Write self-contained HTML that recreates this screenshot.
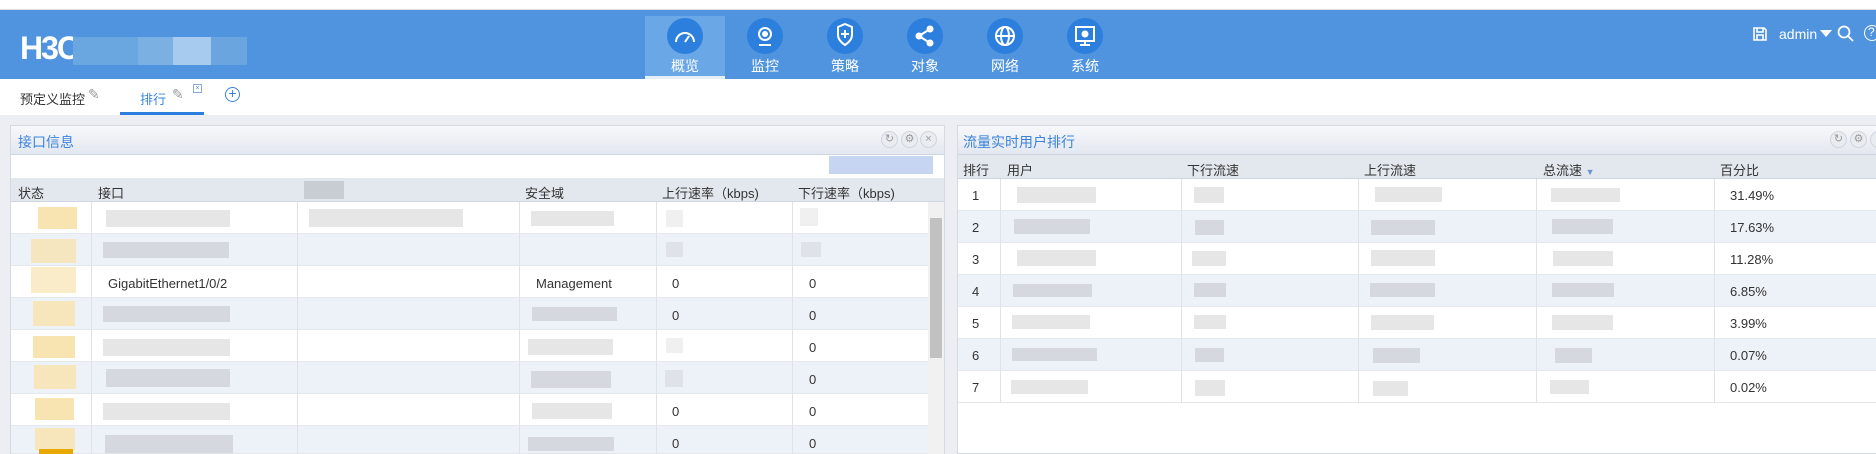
<!DOCTYPE html>
<html><head><meta charset="utf-8"><style>
*{margin:0;padding:0;box-sizing:border-box}
body{width:1876px;height:454px;overflow:hidden;background:#eceef3;font-family:"Liberation Sans","Noto Sans CJK SC",sans-serif;font-size:13px;color:#333;position:relative}
.a{position:absolute}
.hdr{left:0;top:10px;width:1876px;height:69px;background:#5094e0}
.nav{top:16px;width:80px;height:63px;text-align:center;color:#fff;font-size:14px}
.nav .c{position:absolute;left:22px;top:2px;width:36px;height:36px;border-radius:50%;background:#2c7fdc}
.nav span{position:absolute;left:0;width:80px;top:40px}
.g{background:#e6e6e6}
.gd{background:#d5d8de}
.y{background:#f8e4b0}
.row{height:32px;border-bottom:1px solid #e4e7ec}
.st{background:#edf1f8}
.th{background:#e3e8ef;border-bottom:1px solid #cfd6e0}
.vl{width:1px;background:#dfe3e9}
.ph{background:linear-gradient(#f7f8fb,#e3e7ef);border-bottom:1px solid #cfd5e0}
.ic{width:17px;height:17px;border-radius:50%;background:#e9ecf1;border:1px solid #d0d5dd;color:#999;font-size:11px;text-align:center;line-height:15px}
</style></head><body>
<div class="a" style="left:0;top:0;width:1876px;height:10px;background:#fff;border-bottom:1px solid #ddd"></div>
<div class="a hdr"></div>
<div class="a" style="left:20px;top:30px;color:#fff;font:bold 32px 'Liberation Sans',sans-serif;letter-spacing:-2px">H3C</div>
<div class="a" style="left:73px;top:37px;width:65px;height:28px;background:#6aa7e0"></div>
<div class="a" style="left:138px;top:37px;width:35px;height:28px;background:#7ab0e2"></div>
<div class="a" style="left:173px;top:37px;width:38px;height:28px;background:#a6cbee"></div>
<div class="a" style="left:211px;top:37px;width:36px;height:28px;background:#6aa5e0"></div>
<div class="a" style="left:645px;top:16px;width:80px;height:63px;background:#6aa7e6;border-bottom:3px solid #e6eef8"></div>
<div class="a nav" style="left:645px"><div class="c"></div><span>概览</span></div>
<div class="a nav" style="left:725px"><div class="c"></div><span>监控</span></div>
<div class="a nav" style="left:805px"><div class="c"></div><span>策略</span></div>
<div class="a nav" style="left:885px"><div class="c"></div><span>对象</span></div>
<div class="a nav" style="left:965px"><div class="c"></div><span>网络</span></div>
<div class="a nav" style="left:1045px"><div class="c"></div><span>系统</span></div>
<svg class="a" style="left:645px;top:16px" width="480" height="40" fill="none" stroke="#fff" stroke-width="2">
<path d="M31 26a9 9 0 1 1 18 0M40 26l4-6"/>
<circle cx="120" cy="18" r="6"/><circle cx="120" cy="18" r="2" fill="#fff"/><path d="M114 29h12"/>
<path d="M193 11l7-3 7 3v8c0 5-4 8-7 10-3-2-7-5-7-10zM200 14v8M196 18h8"/>
<circle cx="274" cy="20" r="2.5" fill="#fff"/><circle cx="285" cy="13" r="2.5" fill="#fff"/><circle cx="285" cy="27" r="2.5" fill="#fff"/><path d="M274 20l11-7M274 20l11 7"/>
<circle cx="360" cy="20" r="9"/><ellipse cx="360" cy="20" rx="4" ry="9"/><path d="M351 20h18"/>
<rect x="431" y="11" width="18" height="14"/><path d="M440 25v4M435 29h10"/><circle cx="440" cy="18" r="2.5" fill="#fff"/>
</svg>
<svg class="a" style="left:1753px;top:27px" width="14" height="14" fill="none" stroke="#fff" stroke-width="1.6"><path d="M1 1h10l2 2v10H1zM4 1v4h6V1M4 13V8h6v5"/></svg>
<div class="a" style="left:1779px;top:26px;color:#fff;font-size:14px">admin</div>
<svg class="a" style="left:1820px;top:30px" width="12" height="8"><path d="M0 0h12L6 7z" fill="#fff"/></svg>
<svg class="a" style="left:1837px;top:25px" width="18" height="18" fill="none" stroke="#fff" stroke-width="1.8"><circle cx="7" cy="7" r="5.5"/><path d="M11 11l5 5"/></svg>
<div class="a" style="left:1864px;top:25px;width:16px;height:16px;border:1.5px solid #fff;border-radius:50%;color:#fff;font-size:12px;line-height:13px;padding-left:3px">?</div>
<!-- tabs -->
<div class="a" style="left:0;top:79px;width:1876px;height:36px;background:#fff"></div>
<div class="a" style="left:20px;top:89px;font-size:13px;color:#333">预定义监控</div>
<div class="a" style="left:88px;top:86px;color:#999;font-size:14px">✎</div>
<div class="a" style="left:140px;top:89px;color:#3b84d8">排行</div>
<div class="a" style="left:172px;top:86px;color:#999;font-size:14px">✎</div>
<div class="a" style="left:193px;top:84px;width:9px;height:9px;border:1px solid #8aa9d8;font-size:7px;line-height:7px;text-align:center;color:#5a86c8">×</div>
<div class="a" style="left:225px;top:87px;width:15px;height:15px;border:1.5px solid #3b84d8;border-radius:50%;color:#3b84d8;font-size:14px;line-height:11px;text-align:center">+</div>
<div class="a" style="left:120px;top:112px;width:84px;height:3px;background:#2b7fe0"></div>
<!-- left panel -->
<div class="a" style="left:10px;top:125px;width:935px;height:329px;background:#fff;border:1px solid #d4d9e2"></div>
<div class="a ph" style="left:11px;top:126px;width:933px;height:29px"></div>
<div class="a" style="left:18px;top:132px;color:#3b84d8;font-size:14px">接口信息</div>
<div class="a ic" style="left:881px;top:131px">↻</div><div class="a ic" style="left:901px;top:131px">⚙</div><div class="a ic" style="left:920px;top:131px">×</div>
<div class="a" style="left:829px;top:156px;width:104px;height:18px;background:#c6d5f1"></div>
<div class="a th" style="left:11px;top:178px;width:933px;height:24px"></div>
<div class="a" style="left:18px;top:183px">状态</div><div class="a" style="left:98px;top:183px">接口</div>
<div class="a" style="left:525px;top:183px">安全域</div><div class="a" style="left:662px;top:183px">上行速率（kbps)</div><div class="a" style="left:798px;top:183px">下行速率（kbps)</div>
<div class="a" style="left:304px;top:181px;width:40px;height:18px;background:#c8cdd3"></div>
<div class="a row" style="left:11px;top:202px;width:917px"></div>
<div class="a row st" style="left:11px;top:234px;width:917px"></div>
<div class="a row" style="left:11px;top:266px;width:917px"></div>
<div class="a row st" style="left:11px;top:298px;width:917px"></div>
<div class="a row" style="left:11px;top:330px;width:917px"></div>
<div class="a row st" style="left:11px;top:362px;width:917px"></div>
<div class="a row" style="left:11px;top:394px;width:917px"></div>
<div class="a row st" style="left:11px;top:426px;width:917px;height:28px"></div>
<div class="a vl" style="left:91px;top:202px;height:252px"></div><div class="a vl" style="left:297px;top:202px;height:252px"></div><div class="a vl" style="left:519px;top:202px;height:252px"></div><div class="a vl" style="left:656px;top:202px;height:252px"></div><div class="a vl" style="left:792px;top:202px;height:252px"></div>
<div class="a" style="left:928px;top:202px;width:16px;height:252px;background:#f1f1f1"></div>
<div class="a" style="left:930px;top:218px;width:12px;height:140px;background:#c1c1c1"></div>
<div class="a y" style="left:38px;top:207px;width:39px;height:22px"></div>
<div class="a y" style="left:31px;top:239px;width:45px;height:24px;opacity:.8"></div>
<div class="a y" style="left:31px;top:267px;width:45px;height:26px;opacity:.7"></div>
<div class="a y" style="left:33px;top:301px;width:42px;height:25px;opacity:.85"></div>
<div class="a y" style="left:33px;top:336px;width:42px;height:22px"></div>
<div class="a y" style="left:34px;top:365px;width:42px;height:24px;opacity:.85"></div>
<div class="a y" style="left:35px;top:398px;width:39px;height:22px"></div>
<div class="a y" style="left:35px;top:428px;width:40px;height:22px;opacity:.85"></div>
<div class="a" style="left:39px;top:449px;width:34px;height:5px;background:#e8a800"></div>
<div class="a g" style="left:106px;top:210px;width:124px;height:17px"></div>
<div class="a g" style="left:309px;top:209px;width:154px;height:18px"></div>
<div class="a g" style="left:531px;top:211px;width:83px;height:15px"></div>
<div class="a g" style="left:666px;top:210px;width:17px;height:17px;opacity:.6"></div>
<div class="a g" style="left:800px;top:208px;width:18px;height:18px;opacity:.6"></div>
<div class="a gd" style="left:103px;top:242px;width:126px;height:16px"></div>
<div class="a gd" style="left:666px;top:242px;width:17px;height:15px;opacity:.6"></div>
<div class="a gd" style="left:801px;top:242px;width:20px;height:15px;opacity:.6"></div>
<div class="a" style="left:108px;top:276px">GigabitEthernet1/0/2</div>
<div class="a" style="left:536px;top:276px">Management</div>
<div class="a gd" style="left:103px;top:306px;width:127px;height:16px"></div>
<div class="a gd" style="left:532px;top:307px;width:85px;height:14px"></div>
<div class="a g" style="left:103px;top:339px;width:127px;height:17px"></div>
<div class="a g" style="left:528px;top:339px;width:85px;height:16px"></div>
<div class="a g" style="left:666px;top:338px;width:17px;height:15px;opacity:.6"></div>
<div class="a gd" style="left:106px;top:369px;width:124px;height:18px"></div>
<div class="a gd" style="left:531px;top:371px;width:80px;height:17px"></div>
<div class="a gd" style="left:665px;top:370px;width:18px;height:17px;opacity:.6"></div>
<div class="a g" style="left:103px;top:403px;width:127px;height:17px"></div>
<div class="a g" style="left:532px;top:403px;width:80px;height:16px"></div>
<div class="a gd" style="left:105px;top:435px;width:128px;height:18px"></div>
<div class="a gd" style="left:528px;top:437px;width:86px;height:14px"></div>
<div class="a" style="left:672px;top:308px">0</div><div class="a" style="left:809px;top:308px">0</div>
<div class="a" style="left:672px;top:276px">0</div><div class="a" style="left:809px;top:276px">0</div>
<div class="a" style="left:809px;top:340px">0</div>
<div class="a" style="left:809px;top:372px">0</div>
<div class="a" style="left:672px;top:404px">0</div><div class="a" style="left:809px;top:404px">0</div>
<div class="a" style="left:672px;top:436px">0</div><div class="a" style="left:809px;top:436px">0</div>
<!-- right panel -->
<div class="a" style="left:957px;top:125px;width:919px;height:329px;background:#fff;border:1px solid #d4d9e2;border-right:none"></div>
<div class="a ph" style="left:958px;top:126px;width:918px;height:29px"></div>
<div class="a" style="left:963px;top:132px;color:#3b84d8;font-size:14px">流量实时用户排行</div>
<div class="a ic" style="left:1830px;top:131px">↻</div><div class="a ic" style="left:1850px;top:131px">⚙</div><div class="a ic" style="left:1870px;top:131px">×</div>
<div class="a th" style="left:958px;top:155px;width:918px;height:24px"></div>
<div class="a" style="left:963px;top:160px">排行</div><div class="a" style="left:1007px;top:160px">用户</div><div class="a" style="left:1187px;top:160px">下行流速</div><div class="a" style="left:1364px;top:160px">上行流速</div><div class="a" style="left:1543px;top:160px">总流速 <span style="color:#6a95d0;font-size:9px">▼</span></div><div class="a" style="left:1720px;top:160px">百分比</div>
<div class="a row" style="left:958px;top:179px;width:918px"></div>
<div class="a row st" style="left:958px;top:211px;width:918px"></div>
<div class="a row" style="left:958px;top:243px;width:918px"></div>
<div class="a row st" style="left:958px;top:275px;width:918px"></div>
<div class="a row" style="left:958px;top:307px;width:918px"></div>
<div class="a row st" style="left:958px;top:339px;width:918px"></div>
<div class="a row" style="left:958px;top:371px;width:918px"></div>
<div class="a vl" style="left:1000px;top:179px;height:224px"></div><div class="a vl" style="left:1181px;top:179px;height:224px"></div><div class="a vl" style="left:1358px;top:179px;height:224px"></div><div class="a vl" style="left:1536px;top:179px;height:224px"></div><div class="a vl" style="left:1714px;top:179px;height:224px"></div>
<div class="a" style="left:972px;top:188px">1</div><div class="a" style="left:972px;top:220px">2</div><div class="a" style="left:972px;top:252px">3</div><div class="a" style="left:972px;top:284px">4</div><div class="a" style="left:972px;top:316px">5</div><div class="a" style="left:972px;top:348px">6</div><div class="a" style="left:972px;top:380px">7</div>
<div class="a" style="left:1730px;top:188px">31.49%</div><div class="a" style="left:1730px;top:220px">17.63%</div><div class="a" style="left:1730px;top:252px">11.28%</div><div class="a" style="left:1730px;top:284px">6.85%</div><div class="a" style="left:1730px;top:316px">3.99%</div><div class="a" style="left:1730px;top:348px">0.07%</div><div class="a" style="left:1730px;top:380px">0.02%</div>
<div class="a g" style="left:1017px;top:187px;width:79px;height:16px"></div><div class="a g" style="left:1194px;top:187px;width:30px;height:16px"></div><div class="a g" style="left:1375px;top:187px;width:67px;height:15px"></div><div class="a g" style="left:1551px;top:188px;width:69px;height:14px"></div>
<div class="a gd" style="left:1014px;top:219px;width:76px;height:15px"></div><div class="a gd" style="left:1195px;top:220px;width:29px;height:15px"></div><div class="a gd" style="left:1371px;top:220px;width:64px;height:15px"></div><div class="a gd" style="left:1552px;top:219px;width:61px;height:15px"></div>
<div class="a g" style="left:1017px;top:250px;width:79px;height:16px"></div><div class="a g" style="left:1192px;top:251px;width:34px;height:15px"></div><div class="a g" style="left:1371px;top:250px;width:64px;height:16px"></div><div class="a g" style="left:1553px;top:251px;width:60px;height:15px"></div>
<div class="a gd" style="left:1013px;top:284px;width:79px;height:13px"></div><div class="a gd" style="left:1194px;top:283px;width:32px;height:14px"></div><div class="a gd" style="left:1370px;top:283px;width:65px;height:14px"></div><div class="a gd" style="left:1552px;top:283px;width:62px;height:14px"></div>
<div class="a g" style="left:1012px;top:315px;width:78px;height:14px"></div><div class="a g" style="left:1194px;top:315px;width:32px;height:14px"></div><div class="a g" style="left:1371px;top:315px;width:63px;height:15px"></div><div class="a g" style="left:1552px;top:315px;width:61px;height:15px"></div>
<div class="a gd" style="left:1012px;top:348px;width:85px;height:13px"></div><div class="a gd" style="left:1195px;top:348px;width:29px;height:14px"></div><div class="a gd" style="left:1373px;top:348px;width:47px;height:15px"></div><div class="a gd" style="left:1555px;top:348px;width:37px;height:15px"></div>
<div class="a g" style="left:1011px;top:380px;width:77px;height:14px"></div><div class="a g" style="left:1195px;top:380px;width:30px;height:16px"></div><div class="a g" style="left:1373px;top:381px;width:35px;height:15px"></div><div class="a g" style="left:1550px;top:380px;width:39px;height:14px"></div>
</body></html>
